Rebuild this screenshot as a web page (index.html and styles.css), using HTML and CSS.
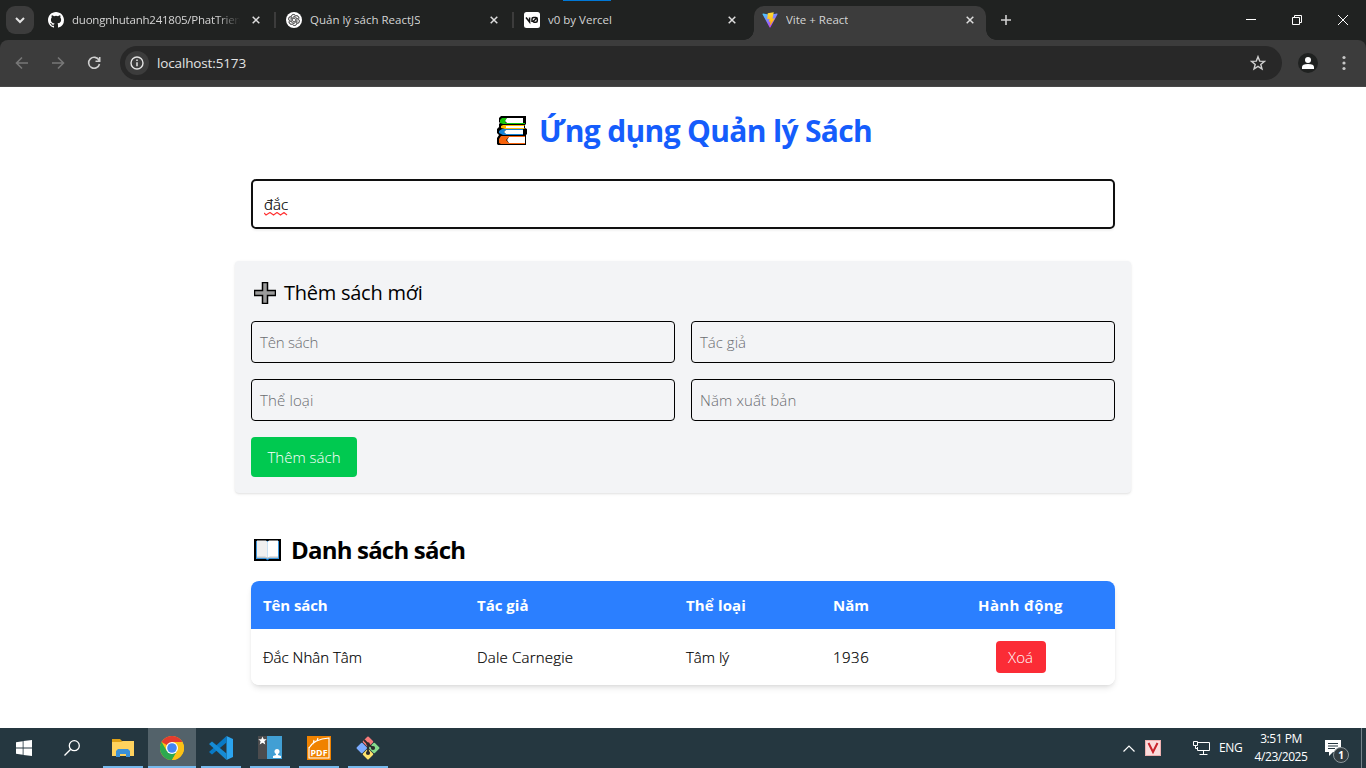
FILE: index.html
```html
<!DOCTYPE html>
<html lang="vi">
<head>
<meta charset="utf-8">
<title>Vite + React</title>
<link rel="stylesheet" href="styles.css">
</head>
<body>
<div class="screen">
  <header class="tabstrip">
    <div class="tab-search"><svg width="12" height="12" viewBox="0 0 12 12"><path d="M2 4l4 4 4-4" fill="none" stroke="#e3e3e3" stroke-width="2"/></svg></div>
    <div class="tab">
      <svg class="fav" viewBox="0 0 16 16"><path fill="#fff" d="M8 0C3.58 0 0 3.58 0 8c0 3.54 2.29 6.53 5.47 7.59.4.07.55-.17.55-.38 0-.19-.01-.82-.01-1.49-2.01.37-2.53-.49-2.69-.94-.09-.23-.48-.94-.82-1.13-.28-.15-.68-.52-.01-.53.63-.01 1.08.58 1.23.82.72 1.21 1.87.87 2.33.66.07-.52.28-.87.51-1.07-1.78-.2-3.64-.89-3.64-3.95 0-.87.31-1.59.82-2.15-.08-.2-.36-1.02.08-2.12 0 0 .67-.21 2.2.82a7.6 7.6 0 014 0c1.53-1.04 2.2-.82 2.2-.82.44 1.1.16 1.92.08 2.12.51.56.82 1.27.82 2.15 0 3.07-1.87 3.75-3.65 3.95.29.25.54.73.54 1.48 0 1.07-.01 1.93-.01 2.2 0 .21.15.46.55.38A8.01 8.01 0 0016 8c0-4.42-3.58-8-8-8z"/></svg>
      <span class="tab-title t1 fade">duongnhutanh241805/PhatTrien</span>
      <svg class="close" viewBox="0 0 8 8"><path d="M.7.7l6.6 6.6M7.3.7L.7 7.3"/></svg>
    </div>
    <div class="tab sep">
      <svg class="fav" viewBox="0 0 16 16"><circle cx="8" cy="8" r="8" fill="#fff"/><g fill="none" stroke="#555" stroke-width=".8"><g id="petal"><path d="M5.3 7.4V4.6a2.3 2.3 0 0 1 4.2-1.2M6.5 8.8V5.5l2.9-1.7a2.3 2.3 0 0 1 3.3 2.5"/></g><use href="#petal" transform="rotate(60 8 8)"/><use href="#petal" transform="rotate(120 8 8)"/><use href="#petal" transform="rotate(180 8 8)"/><use href="#petal" transform="rotate(240 8 8)"/><use href="#petal" transform="rotate(300 8 8)"/></g></svg>
      <span class="tab-title t2">Quản lý sách ReactJS</span>
      <svg class="close" viewBox="0 0 8 8"><path d="M.7.7l6.6 6.6M7.3.7L.7 7.3"/></svg>
    </div>
    <div class="tab sep">
      <svg class="fav" viewBox="0 0 16 16"><rect width="16" height="16" rx="2.5" fill="#fff"/><path d="M2 5.500l3.600 4.500V5.500M8 10V7q0-1.500 1.500-1.500h2.300q1.500 0 1.500 1.500v1.800q0 1.500-1.500 1.500H9.500M8.500 10l4.500-4.300" fill="none" stroke="#111" stroke-width="1.5"/></svg>
      <span class="tab-title t3">v0 by Vercel</span>
      <svg class="close" viewBox="0 0 8 8"><path d="M.7.7l6.6 6.6M7.3.7L.7 7.3"/></svg>
    </div>
    <div class="tab active">
      <svg class="fav" viewBox="0 0 32 32"><defs><linearGradient id="va" x1="0" y1="0" x2=".6" y2="1"><stop offset="0" stop-color="#41d1ff"/><stop offset="1" stop-color="#bd34fe"/></linearGradient><linearGradient id="vb" x1="0" y1="0" x2="0" y2="1"><stop offset="0" stop-color="#ffdb38"/><stop offset="1" stop-color="#ffa800"/></linearGradient></defs><path d="M1 4.500l14 26q1 1.500 2 0L31 4.500q.5-1.500-1-1.500L16 5.500 2 3q-1.500 0-1 1.500z" fill="url(#va)"/><path d="M23.500.5L11.500 2.500l-1 12 4.500-.8-1.500 6 3.500-.9-2 10L26 12.500l-5 1z" fill="url(#vb)"/></svg>
      <span class="tab-title t4">Vite + React</span>
      <svg class="close" viewBox="0 0 8 8"><path d="M.7.7l6.6 6.6M7.3.7L.7 7.3"/></svg>
    </div>
    <svg class="plus" width="10" height="10" viewBox="0 0 10 10"><path d="M5 0v10M0 5h10" stroke="#d0d0d0" stroke-width="1.6"/></svg>
    <div class="winctl">
      <svg width="10" height="10" viewBox="0 0 10 10"><path d="M0 4.500h10"/></svg>
      <svg width="10" height="10" viewBox="0 0 10 10"><path d="M.5 2.500h7v7h-7zM2.500 2V.5h7v7H8"/></svg>
      <svg width="10" height="10" viewBox="0 0 10 10"><path d="M0 0l10 10M10 0L0 10"/></svg>
    </div>
    <div class="strip-mark"></div>
  </header>
  <div class="toolbar">
    <div class="nav">
      <svg viewBox="0 0 16 16" class="dim"><path d="M14 8H3M8 2.500L2.500 8 8 13.500"/></svg>
      <svg viewBox="0 0 16 16" class="dim"><path d="M2 8h11M8 2.500L13.500 8 8 13.500"/></svg>
      <svg viewBox="0 0 16 16"><path d="M13 5.200A5.500 5.500 0 1 0 13.500 9M13.700 2v4.200H9.500"/></svg>
    </div>
    <div class="omnibox">
      <div class="info"><svg width="14" height="14" viewBox="0 0 14 14"><circle cx="7" cy="7" r="6" fill="none" stroke="#e3e3e3" stroke-width="1.4"/><path d="M7 6.300v4M7 3.500v1.600" stroke="#e3e3e3" stroke-width="1.5"/></svg></div>
      <span class="url">localhost:5173</span>
      <svg class="star" width="16" height="16" viewBox="0 0 16 16"><path d="M8 1.700l1.700 4.400 4.800.3-3.700 3 1.200 4.600L8 11.400 4 14l1.200-4.600-3.700-3 4.800-.3z" fill="none" stroke="#d0d0d0" stroke-width="1.4"/></svg>
    </div>
    <svg class="avatar" width="20" height="20" viewBox="0 0 20 20"><circle cx="10" cy="10" r="10" fill="#1f2120"/><circle cx="10" cy="7" r="3" fill="#fff"/><path d="M4 16v-2q0-3 6-3t6 3v2z" fill="#fff"/></svg>
    <svg class="kebab" width="4" height="16" viewBox="0 0 4 16" fill="#c7c7c7"><circle cx="2" cy="2.500" r="1.600"/><circle cx="2" cy="8" r="1.600"/><circle cx="2" cy="13.500" r="1.600"/></svg>
  </div>

  <main class="page">
    <h1 class="title">
      <svg width="30" height="30" viewBox="0 0 30 30"><path d="M4 0h25v8l-1 1v3l2 1v5l-1 1v10H1l-1-1v-6l2-3-2-2v-4l2-2V8l1-1-1-1V2z"/><path d="M28 2H5L3 4v3l3 1h22V7H9l-1-2 2-3z" fill="#16c60c"/><path d="M10 2h16v5H10l-2-2z" fill="#fff"/><path d="M28 9H6l-2 1v2l4 1h20l-1-1H9v-2h18z" fill="#ffb900"/><path d="M9 10h18v2H9z" fill="#fff"/><path d="M26 13H5l-3 2v2l4 2h20v-1H9l-2-2 2-2h17z" fill="#1683d8"/><path d="M9 14h17v4H9l-2-2z" fill="#fff"/><path d="M28 20H4l-2 3v4l2 1h24v-1H12l-3-3 3-3h16z" fill="#f7630c"/><path d="M12 21h16v6H12l-2-3z" fill="#fff"/></svg>
      <span class="title-text">Ứng dụng Quản lý Sách</span>
    </h1>
    <div class="search"><span class="query">đắc<svg class="squiggle" viewBox="0 0 24 4"><path d="M0 1l2 2 4-2.500 3.500 2.500 3.500-2.500 3.500 2.500 3.500-2.500 3 2.500" fill="none" stroke="#f33" stroke-width="1.2"/></svg></span></div>
    <section class="card">
      <h2 class="card-head"><svg width="22" height="22" viewBox="0 0 22 22"><path d="M8.500.5h5v8h8v5h-8v8h-5v-8h-8v-5h8z" fill="#9b9b9b" stroke="#000" stroke-width="1.5"/></svg><span class="card-title">Thêm sách mới</span></h2>
      <div class="grid">
        <div class="field"><span class="p1">Tên sách</span></div>
        <div class="field"><span class="p2">Tác giả</span></div>
        <div class="field"><span class="p3">Thể loại</span></div>
        <div class="field"><span class="p4">Năm xuất bản</span></div>
      </div>
      <button class="add"><span class="add-text">Thêm sách</span></button>
    </section>
    <h2 class="list-head"><svg width="27" height="22" viewBox="0 0 27 22"><path d="M0 0h27v22H0z" fill="#000"/><path d="M2 2h23v18H15l-1.500 1-1.500-1H2z" fill="#3a96dd"/><path d="M3 1.500h9l1.500 1.500v16L11 18.500H3z" fill="#f0f0f0"/><path d="M24 1.500h-9l-1.500 1.500v16L16 18.500h8z" fill="#fff"/><path d="M3 17.500h8l2.500 1 2.500-1h8v1.300h-8l-2.500 1-2.500-1H3z" fill="#c8c8c8"/><path d="M12 20h3l-1.500 1.500z" fill="#0078d7"/></svg><span class="list-title">Danh sách sách</span></h2>
    <div class="table">
      <div class="row head"><span><b class="h1c">Tên sách</b></span><span><b class="h2c">Tác giả</b></span><span><b class="h3c">Thể loại</b></span><span><b class="h4c">Năm</b></span><span class="mid"><b class="h5c">Hành động</b></span></div>
      <div class="row body"><span><i class="c1">Đắc Nhân Tâm</i></span><span><i class="c2">Dale Carnegie</i></span><span><i class="c3">Tâm lý</i></span><span><i class="c4">1936</i></span><span class="mid"><button class="del"><i class="del-text">Xoá</i></button></span></div>
    </div>
  </main>

  <footer class="taskbar">
    <div class="start"><svg width="16" height="16" viewBox="0 0 16 16" fill="#fff"><path d="M0 2.200L6.700 1.300v6.300H0zM7.500 1.100L16 0v7.600H7.500zM0 8.400h6.700v6.400L0 13.800zM7.500 8.400H16V16l-8.500-1.100z"/></svg></div>
    <div class="start"><svg width="16" height="16" viewBox="0 0 16 16" fill="none" stroke="#fff" stroke-width="1.3"><circle cx="10.300" cy="5.700" r="5"/><path d="M6.700 9.300L.5 15.500"/></svg></div>
    <div class="apps">
      <div class="app"><svg width="22" height="20" viewBox="0 0 22 20"><path d="M0 1h8l2 2h11v3H0z" fill="#e0a116"/><path d="M0 4h9l2-1h11v15H0z" fill="#ffd25e"/><path d="M4 19v-6l2-2h10l2 2v6h-4v-3H8v3z" fill="#3b91d8"/></svg></div>
      <div class="app current"><svg width="24" height="24" viewBox="0 0 24 24"><circle cx="12" cy="12" r="12" fill="#fbc116"/><path d="M12 12L1.600 6A12 12 0 0 1 22.400 6z" fill="#e33b2e"/><path d="M1.600 6A12 12 0 0 0 12 24l5.200-9L12 12 6.800 15z" fill="#2da94f"/><path d="M12 6h10.400A12 12 0 0 1 12 24l5.200-9z" fill="#fbc116"/><circle cx="12" cy="12" r="6" fill="#fff"/><circle cx="12" cy="12" r="4.800" fill="#4285f4"/></svg></div>
      <div class="app"><svg width="24" height="24" viewBox="0 0 24 24"><path d="M17.500 0L24 3v18l-6.500 3z" fill="#2ba4ef"/><path d="M17.500 0v6.500L3 18.500 0 16z" fill="#0879c5"/><path d="M0 8l3-2.500 14.500 12V24z" fill="#168bd4"/></svg></div>
      <div class="app"><svg width="24" height="24" viewBox="0 0 24 24"><path d="M0 0h9v23H0z" fill="#4c4c4e"/><path d="M9 0h15v23H9z" fill="#419fd4"/><path d="M4.500.5l1.200 2.700h3L6.400 5.200l.9 3.200-2.800-1.700-2.800 1.700.9-3.200L.3 3.200h3z" fill="#fff"/><circle cx="19" cy="15.500" r="2.500" fill="#fff"/><path d="M15 22v-2l3-1v-2h2v2l3 1v2z" fill="#fff"/></svg></div>
      <div class="app"><svg width="24" height="24" viewBox="0 0 24 24"><path d="M0 0h24v24H0z" fill="#f08200"/><path d="M2 12Q7 3 22 2v10M2 11v11h20V12M6 8l1-4M10 5l1-3" fill="none" stroke="#fff" stroke-width="1.1"/><text x="3.500" y="20" class="pdf" textLength="17" lengthAdjust="spacingAndGlyphs">PDF</text></svg></div>
      <div class="app"><svg width="24" height="24" viewBox="0 0 24 24"><g transform="rotate(45 12 12)"><rect x="3.600" y="3.600" width="8" height="8" rx="1" fill="#f77b7b"/><rect x="12.400" y="3.600" width="8" height="8" rx="1" fill="#87db8c"/><rect x="3.600" y="12.400" width="8" height="8" rx="1" fill="#7cacff"/><rect x="12.400" y="12.400" width="8" height="8" rx="1" fill="#ffe36d"/></g><path d="M8 4l4 4v9M12 8l5 4" fill="none" stroke="#2b2b2b" stroke-width="1.800"/><g fill="#2b2b2b"><circle cx="12" cy="8" r="1.800"/><circle cx="12" cy="17" r="2.100"/><circle cx="17" cy="12" r="2.100"/></g></svg></div>
    </div>
    <div class="tray">
      <svg class="up" width="12" height="7" viewBox="0 0 12 7"><path d="M.5 6.500L6 1l5.500 5.500" fill="none" stroke="#fff" stroke-width="1.2"/></svg>
      <svg class="vkey" width="16" height="16" viewBox="0 0 16 16"><rect width="16" height="16" fill="#eeb0b0"/><rect x="1" y="1" width="14" height="14" fill="#fbdcdc"/><path d="M3.500 3L8 12l4.500-9" fill="none" stroke="#c8232b" stroke-width="2"/></svg>
      <svg class="net" width="17" height="14" viewBox="0 0 17 14" fill="none" stroke="#fff"><path d="M5 1.500h11.500v8H4.500V6M10.500 9.500v4M6.500 13.500h8M.5.500h4v4h-4zM2.500 4.500v3h2"/></svg>
      <span class="lang"><i>ENG</i></span>
      <div class="clock"><span class="time">3:51 PM</span><span class="date">4/23/2025</span></div>
      <div class="notif"><svg width="16" height="16" viewBox="0 0 16 16"><path d="M0 0h16v12h-8l-4 4v-4H0z" fill="#fff"/><path d="M3 3.500h10M3 6h10M3 8.500h7" stroke="#253640"/></svg><b class="badge">1</b></div>
    </div>
    <div class="peek"></div>
  </footer>
</div>
</body>
</html>
```
FILE: styles.css
```css
* { box-sizing: border-box; }
body { margin: 0; font-family: "Open Sans", "Noto Sans", sans-serif; color: #000; background: #fff; }
i { font-style: normal; }
span, i, b, h1, h2 { white-space: nowrap; }
svg { display: block; flex: none; }
.screen { width: 1366px; height: 768px; display: flex; flex-direction: column; overflow: hidden; }

.tabstrip { height: 40px; background: #202221; display: flex; align-items: center; position: relative; flex: none; }
.tab-search { width: 28px; height: 28px; margin: 0 6px; border-radius: 9px; background: #3c3c3c; display: grid; place-items: center; }
.tab { width: 238px; height: 28px; padding: 0 18px 0 8px; display: flex; align-items: center; position: relative; }
.tab.sep::before { content: ""; position: absolute; left: -4px; top: 6px; width: 2px; height: 16px; background: #3c3c3c; }
.tab.active { width: 232px; height: 34px; margin-top: 6px; padding-right: 12px; padding-bottom: 6px; background: #3c3c3c; border-radius: 10px 10px 0 0; }
.tab.active::before, .tab.active::after { content: ""; position: absolute; bottom: 0; width: 10px; height: 10px; }
.tab.active::before { left: -10px; background: radial-gradient(circle at 0 0, transparent 9.5px, #3c3c3c 10px); }
.tab.active::after { right: -10px; background: radial-gradient(circle at 100% 0, transparent 9.5px, #3c3c3c 10px); }
.fav { width: 16px; height: 16px; margin-right: 8px; }
.tab-title { font-size: 11.5px; line-height: 16px; color: #d4d4d4; overflow: hidden; }
.fade { width: 168px; letter-spacing: -0.23px; -webkit-mask-image: linear-gradient(90deg, #000 145px, transparent); mask-image: linear-gradient(90deg, #000 145px, transparent); }
.close { width: 8px; height: 8px; margin-left: auto; fill: none; stroke: #dedede; stroke-width: 1.5; }
.plus { margin-left: 15px; }
.winctl { margin-left: auto; display: flex; gap: 36px; padding-right: 18px; }
.winctl svg { fill: none; stroke: #fff; stroke-width: 1; }
.strip-mark { position: absolute; left: 563px; top: 0; width: 48px; height: 1px; background: #0078d7; }

.toolbar { height: 47px; background: #3c3c3c; border-bottom: 1px solid #484848; display: flex; align-items: center; flex: none; border-radius: 8px 8px 0 0; box-shadow: 0 -8px 0 0 #202221; clip-path: inset(0); }
.nav { width: 120px; padding-left: 14px; display: flex; gap: 20px; }
.nav svg { width: 16px; height: 16px; fill: none; stroke: #d0d0d0; stroke-width: 1.6; }
.nav .dim { stroke: #777; }
.omnibox { width: 1162px; height: 34px; border-radius: 17px; background: #282828; display: flex; align-items: center; padding: 0 16px 0 5px; }
.info { width: 24px; height: 24px; border-radius: 12px; background: #3c3c3c; display: grid; place-items: center; margin-right: 8px; }
.url { font-size: 13.5px; line-height: 18px; color: #e3e3e3; letter-spacing: -0.14px; }
.star { margin-left: auto; }
.avatar { margin-left: 16px; }
.kebab { margin-left: 24px; }
.screen { background: linear-gradient(#202221 60px, #fff 60px); }

.page { width: 896px; margin: 0 auto; height: 641px; flex: none; padding-top: 24px; }
.title { margin: 0; height: 40px; padding-left: 3px; display: flex; justify-content: center; align-items: center; gap: 12px; color: #155dfc; font-size: 30px; font-weight: 700; line-height: 40px; letter-spacing: -0.67px; }
.search { margin: 28px 16px 32px; height: 50px; border: 2px solid #101010; border-radius: 5px; padding: 11px 11px; font-size: 16px; line-height: 24px; box-shadow: 0 2px 2px rgba(0,0,0,.05); }
.query { position: relative; display: inline-block; font-weight: 300; font-size: 15px; line-height: 24px; vertical-align: top; -webkit-text-stroke: .2px #000; }
.squiggle { position: absolute; left: 0; top: 20px; width: 24px; height: 4px; }
.card { height: 232px; padding: 16px; background: #f3f4f6; border-radius: 4px; box-shadow: 0 1px 3px rgba(0,0,0,.1), 0 1px 2px -1px rgba(0,0,0,.1); }
.card-head { margin: 0 0 16px; height: 28px; padding: 4px 0 0 3px; display: flex; gap: 8px; align-items: center; font-size: 20px; font-weight: 500; line-height: 28px; letter-spacing: -0.25px; }
.grid { display: grid; grid-template-columns: 1fr 1fr; gap: 16px; }
.field { height: 42px; border: 1px solid #000; border-radius: 4px; padding: 8px; font-size: 15px; line-height: 24px; color: #6b6d71; font-weight: 300; }
.p1 { letter-spacing: -0.2px; }
.p3, .p4 { letter-spacing: 0.13px; }
.add { display: block; width: 106px; height: 40px; margin-top: 16px; padding: 0; border: 0; border-radius: 4px; background: #00c950; color: #fff; font: 300 15px/24px "Open Sans", sans-serif; }
.list-head { margin: 41px 16px 15px; height: 32px; padding-left: 3px; display: flex; gap: 10px; align-items: center; font-size: 24px; font-weight: 700; line-height: 32px; letter-spacing: -0.8px; }
.table { margin: 0 16px; border-radius: 8px; overflow: hidden; box-shadow: 0 4px 6px -1px rgba(0,0,0,.1), 0 2px 4px -2px rgba(0,0,0,.1); }
.row { display: grid; grid-template-columns: 214px 209px 147px 105px 189px; align-items: center; font-size: 15px; }
.row > span { padding: 0 12px; line-height: 24px; }
.row > .mid { text-align: center; display: flex; justify-content: center; }
.head { height: 48px; background: #2b7fff; color: #fff; }
.head b { font-weight: 700; }
.h1c { letter-spacing: -0.1px; }
.h3c { letter-spacing: 0.15px; }
.h5c { letter-spacing: 0.37px; }
.body { height: 56px; background: #fff; font-weight: 300; -webkit-text-stroke: .2px #000; }
.c2 { letter-spacing: 0.2px; }
.c4 { letter-spacing: 0.5px; }
.del { width: 50px; height: 32px; border: 0; padding: 0; border-radius: 4px; background: #fb2c36; color: #fff; font: 300 15px/24px "Open Sans", sans-serif; -webkit-text-stroke: 0; }

.taskbar { height: 40px; background: #253740; display: flex; flex: none; color: #fff; }
.start { width: 48px; height: 40px; display: grid; place-items: center; }
.apps { display: flex; gap: 1px; margin-left: 3px; }
.app { width: 48px; height: 40px; display: grid; place-items: center; position: relative; }
.app::after { content: ""; position: absolute; left: 4px; right: 4px; bottom: 0; height: 2px; background: #76b9ed; }
.app.current { background: #53626a; }
.app.current::after { left: 0; right: 0; }
.pdf { font: 700 8px "Open Sans", sans-serif; fill: #fff; }
.tray { margin-left: auto; display: flex; align-items: center; height: 40px; }
.vkey { margin: 0 32px 0 10px; }
.net { margin-right: 9px; }
.lang { width: 36px; font-size: 12px; line-height: 16px; letter-spacing: -0.4px; }
.clock { width: 52px; display: flex; flex-direction: column; align-items: center; font-size: 12px; line-height: 18px; letter-spacing: -0.45px; }
.notif { position: relative; margin-left: 18px; margin-right: 20px; }
.badge { position: absolute; left: 8px; top: 7px; width: 16px; height: 16px; border: 1px solid #8c969b; border-radius: 8px; background: #333d42; font-size: 10px; line-height: 14px; text-align: center; }
.peek { width: 5px; border-left: 1px solid #75838a; }
```
